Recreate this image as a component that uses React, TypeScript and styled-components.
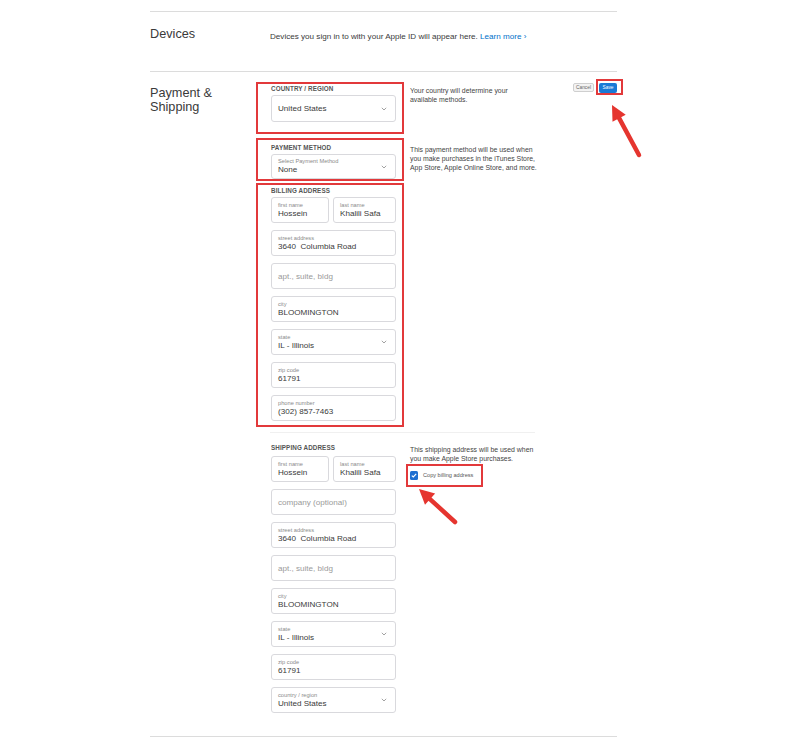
import React from 'react';
import styled, { createGlobalStyle } from 'styled-components';

const GlobalStyle = createGlobalStyle`
  html, body {
    margin: 0;
    padding: 0;
    background: #ffffff;
  }
  body {
    font-family: "Liberation Sans", Arial, sans-serif;
    color: #333;
  }
`;

const RED = '#e2393b';
const BLUE = '#0070c9';

const Page = styled.div`
  position: relative;
  width: 800px;
  height: 748px;
  overflow: hidden;
  padding-top: 11px;
  box-sizing: border-box;
`;

const DevicesSection = styled.section`
  margin-left: 150px;
  width: 467px;
  height: 60px;
  box-sizing: border-box;
  border-top: 1px solid #dcdcdc;
  padding-top: 14px;
  display: grid;
  grid-template-columns: 120px 1fr;
  align-items: start;
`;

const SectionTitle = styled.h2`
  margin: 0;
  font-size: 12.7px;
  line-height: 14px;
  font-weight: 400;
  color: #3a3a3a;
`;

const DevicesTitle = styled(SectionTitle)`
  line-height: 16px;
`;

const DevicesText = styled.p`
  margin: 5px 0 0;
  font-size: 8.1px;
  line-height: 11px;
  color: #3a3a3a;

  a {
    color: ${BLUE};
    text-decoration: none;
  }
`;

const PaymentSection = styled.section`
  margin-left: 150px;
  width: 467px;
  border-top: 1px solid #dcdcdc;
  border-bottom: 1px solid #dcdcdc;
  display: flex;
  align-items: flex-start;
`;

const TitleColumn = styled.div`
  width: 106px;
  flex: none;
  padding-top: 14px;
`;

const FormColumn = styled.div`
  width: 317px;
  flex: none;
  padding: 10px 0 21px;
`;

const Actions = styled.div`
  display: flex;
  align-items: center;
  gap: 2px;
  padding-top: 7px;
`;

const CancelButton = styled.button`
  width: 21px;
  height: 9px;
  padding: 0;
  border: 1px solid #cfcfcf;
  border-radius: 2px;
  background: #f3f3f3;
  color: #666;
  font-family: inherit;
  font-size: 4.8px;
  line-height: 7px;
`;

const SaveFrame = styled.div`
  border: 2px solid ${RED};
  padding: 2px 4px 0 1px;
  height: 16px;
  box-sizing: border-box;
  display: flex;
  align-items: flex-start;
`;

const SaveButton = styled.button`
  width: 18px;
  height: 10px;
  padding: 0;
  border: none;
  border-radius: 2px;
  background: #1a7ad6;
  color: #fff;
  font-family: inherit;
  font-size: 4.8px;
  line-height: 10px;
`;

const FormRow = styled.div<{ $mt: number }>`
  display: grid;
  grid-template-columns: 148px 1fr;
  column-gap: 6px;
  align-items: start;
  margin-top: ${(p) => p.$mt}px;
`;

const Block = styled.div<{ $marked?: boolean; $pad: string }>`
  border: 2px solid ${(p) => (p.$marked ? RED : 'transparent')};
  padding: ${(p) => p.$pad};
  display: flex;
  flex-direction: column;
  gap: 7px;
`;

const GroupLabel = styled.div<{ $mb: number }>`
  font-size: 6.3px;
  line-height: 8px;
  font-weight: 700;
  letter-spacing: 0.1px;
  color: #555;
  margin-bottom: ${(p) => p.$mb - 7}px;
`;

const Note = styled.div<{ $mt: number }>`
  margin-top: ${(p) => p.$mt}px;
  font-size: 6.9px;
  line-height: 9px;
  color: #444;
`;

const Divider = styled.div`
  height: 1px;
  margin: 5px 0 4px 14px;
  width: 265px;
  background: #f0f0f0;
`;

const Pair = styled.div`
  display: grid;
  grid-template-columns: 58px 1fr;
  column-gap: 4px;
`;

const FieldBox = styled.div<{ $h: number }>`
  height: ${(p) => p.$h}px;
  box-sizing: border-box;
  border: 1px solid #d9d9dd;
  border-radius: 3px;
  background: #fff;
  padding: 0 8px 0 6px;
  display: flex;
  align-items: center;
`;

const FieldText = styled.div`
  flex: 1;
  min-width: 0;
  display: flex;
  flex-direction: column;
`;

const FieldLabel = styled.span`
  font-size: 5.7px;
  line-height: 6px;
  color: #8a8a8a;
`;

const FieldValue = styled.span<{ $muted?: boolean }>`
  font-size: 8.1px;
  line-height: 11px;
  color: ${(p) => (p.$muted ? '#9a9a9a' : '#3a3a3a')};
  white-space: pre;
`;

const CheckFrame = styled.label`
  margin-top: 1px;
  width: 77px;
  height: 23px;
  box-sizing: border-box;
  border: 2px solid ${RED};
  margin-left: -4px;
  padding-left: 2px;
  display: flex;
  align-items: center;
  gap: 5px;
  font-size: 5.6px;
  color: #555;
`;

const CheckBox = styled.span`
  width: 8px;
  height: 9px;
  border-radius: 1.5px;
  background: #1f6fd0;
  display: flex;
  align-items: center;
  justify-content: center;
`;

const Overlay = styled.svg`
  position: absolute;
  left: 0;
  top: 0;
  pointer-events: none;
`;

const Chevron = () => (
  <svg width="6" height="4" viewBox="0 0 6 4">
    <path d="M0.8 0.8 L3 3 L5.2 0.8" fill="none" stroke="#8a8a8a" strokeWidth="0.8" />
  </svg>
);

type FieldProps = {
  label?: string;
  value?: string;
  placeholder?: string;
  select?: boolean;
  height?: number;
};

const Field = ({ label, value, placeholder, select, height = 26 }: FieldProps) => (
  <FieldBox $h={height}>
    <FieldText>
      {label && <FieldLabel>{label}</FieldLabel>}
      {placeholder ? <FieldValue $muted>{placeholder}</FieldValue> : <FieldValue>{value}</FieldValue>}
    </FieldText>
    {select && <Chevron />}
  </FieldBox>
);

const Arrow = ({ tip, tail }: { tip: [number, number]; tail: [number, number] }) => {
  const dx = tip[0] - tail[0];
  const dy = tip[1] - tail[1];
  const len = Math.hypot(dx, dy);
  const ux = dx / len;
  const uy = dy / len;
  const px = -uy;
  const py = ux;
  const head = 15;
  const half = 7.5;
  const bx = tip[0] - ux * head;
  const by = tip[1] - uy * head;
  const pts = [
    `${tip[0]},${tip[1]}`,
    `${bx + px * half},${by + py * half}`,
    `${bx - px * half},${by - py * half}`,
  ].join(' ');
  return (
    <g>
      <line x1={tail[0]} y1={tail[1]} x2={bx + ux * 2} y2={by + uy * 2} stroke="#e5352f" strokeWidth="4.5" strokeLinecap="round" />
      <polygon points={pts} fill="#e5352f" />
    </g>
  );
};

export default function App() {
  return (
    <Page>
      <GlobalStyle />
      <DevicesSection>
        <DevicesTitle>Devices</DevicesTitle>
        <DevicesText>
          Devices you sign in to with your Apple ID will appear here. <a href="#">Learn more ›</a>
        </DevicesText>
      </DevicesSection>

      <PaymentSection>
        <TitleColumn>
          <SectionTitle>
            Payment &amp;
            <br />
            Shipping
          </SectionTitle>
        </TitleColumn>

        <FormColumn>
          <FormRow $mt={0}>
            <Block $marked $pad="1px 6px 10px 13px">
              <GroupLabel $mb={2}>COUNTRY / REGION</GroupLabel>
              <Field value="United States" select height={27} />
            </Block>
            <Note $mt={3.5}>
              Your country will determine your
              <br />
              available methods.
            </Note>
          </FormRow>

          <FormRow $mt={4}>
            <Block $marked $pad="4px 6px 0 13px">
              <GroupLabel $mb={2}>PAYMENT METHOD</GroupLabel>
              <Field label="Select Payment Method" value="None" select height={25} />
            </Block>
            <Note $mt={6.5}>
              This payment method will be used when
              <br />
              you make purchases in the iTunes Store,
              <br />
              App Store, Apple Online Store, and more.
            </Note>
          </FormRow>

          <FormRow $mt={2}>
            <Block $marked $pad="2px 6px 4px 13px">
              <GroupLabel $mb={2}>BILLING ADDRESS</GroupLabel>
              <Pair>
                <Field label="first name" value="Hossein" />
                <Field label="last name" value="Khalili Safa" />
              </Pair>
              <Field label="street address" value="3640  Columbia Road" />
              <Field placeholder="apt., suite, bldg" />
              <Field label="city" value="BLOOMINGTON" />
              <Field label="state" value="IL - Illinois" select />
              <Field label="zip code" value="61791" />
              <Field label="phone number" value="(302) 857-7463" />
            </Block>
            <div />
          </FormRow>

          <Divider />

          <FormRow $mt={0}>
            <Block $pad="5px 6px 0 13px">
              <GroupLabel $mb={4}>SHIPPING ADDRESS</GroupLabel>
              <Pair>
                <Field label="first name" value="Hossein" />
                <Field label="last name" value="Khalili Safa" />
              </Pair>
              <Field placeholder="company (optional)" />
              <Field label="street address" value="3640  Columbia Road" />
              <Field placeholder="apt., suite, bldg" />
              <Field label="city" value="BLOOMINGTON" />
              <Field label="state" value="IL - Illinois" select />
              <Field label="zip code" value="61791" />
              <Field label="country / region" value="United States" select />
            </Block>
            <div>
              <Note $mt={7.5}>
                This shipping address will be used when
                <br />
                you make Apple Store purchases.
              </Note>
              <CheckFrame>
                <CheckBox>
                  <svg width="6" height="5" viewBox="0 0 6 5">
                    <path d="M0.8 2.6 L2.3 4 L5.2 0.9" fill="none" stroke="#fff" strokeWidth="1.1" />
                  </svg>
                </CheckBox>
                Copy billing address
              </CheckFrame>
            </div>
          </FormRow>
        </FormColumn>

        <Actions>
          <CancelButton>Cancel</CancelButton>
          <SaveFrame>
            <SaveButton>Save</SaveButton>
          </SaveFrame>
        </Actions>
      </PaymentSection>

      <Overlay width="800" height="748" viewBox="0 0 800 748">
        <Arrow tip={[612, 105]} tail={[639, 155]} />
        <Arrow tip={[419, 489]} tail={[455, 522]} />
      </Overlay>
    </Page>
  );
}
